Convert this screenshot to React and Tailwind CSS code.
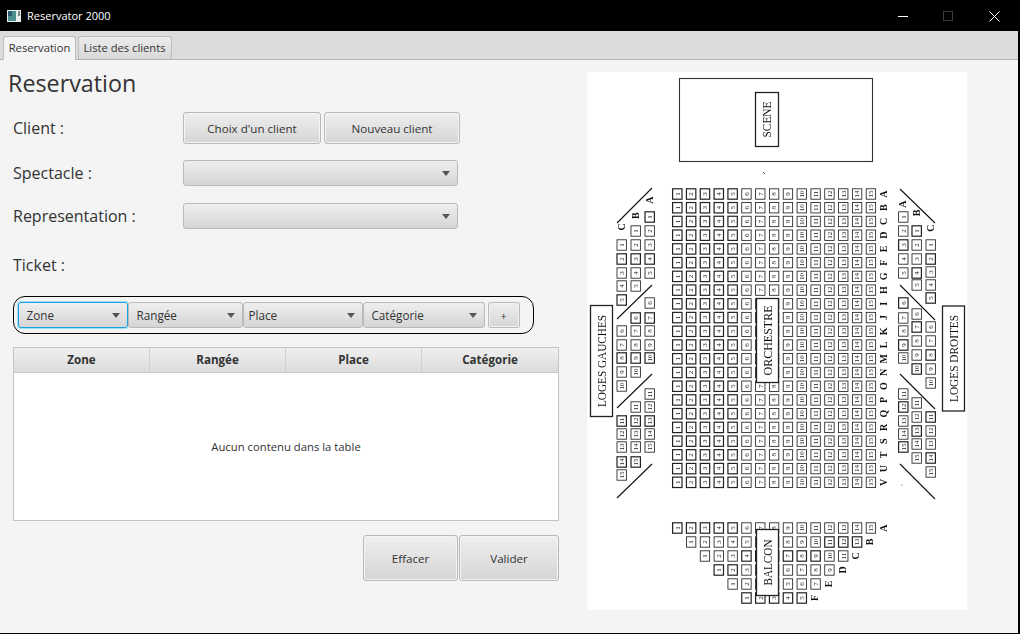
import React from 'react'

const btn = 'flex items-center justify-center rounded-[3px] border border-[#b9b9b9] bg-gradient-to-b from-[#efefef] to-[#d5d5d5] pt-[2px] text-[#333] shadow-[inset_0_0_0_1px_#f4f4f4]'

const Combo = ({label, className, focused}) => (
    <div className={`flex items-center justify-between rounded-[3px] border bg-gradient-to-b from-[#efefef] to-[#d5d5d5] pr-[7px] ${focused ? 'border-[#1ba1e2] shadow-[0_0_0_1px_#9fdcf5]' : 'border-[#b9b9b9]'} ${className}`}>
        <span className="pt-[2px] text-[11.7px] text-[#333]">{label}</span>
        <svg width="8" height="5" viewBox="0 0 8 5"><path d="M0 0h8L4 5z" fill="#555"/></svg>
    </div>
)

const Label = ({children, className}) => (
    <div className={`text-[16px] leading-[22px] text-[#333] ${className}`}>{children}</div>
)

const Seat = ({x, y, n}) => (
    <g>
        <rect x={x - 4.7} y={y - 5.2} width="9.4" height="10.4" fill="#fff" stroke="#222" strokeWidth={(n + Math.round(x)) % 3 === 0 ? 1.2 : 0.85}/>
        <text x={x} y={y} transform={`rotate(-90 ${x} ${y})`} textAnchor="middle" dy="2.3" fontSize="7" fill="#222">{n}</text>
    </g>
)

const Letter = ({x, y, c, size = 10}) => (
    <text x={x} y={y} transform={`rotate(-90 ${x} ${y})`} textAnchor="middle" dy="3.4" fontSize={size} fontWeight="bold" fill="#111">{c}</text>
)

const Box = ({x, y, w, h, label, len}) => (
    <g>
        <rect x={x} y={y} width={w} height={h} fill="#fff" stroke="#222" strokeWidth="1.3"/>
        <text x={x + w / 2} y={y + h / 2} transform={`rotate(-90 ${x + w / 2} ${y + h / 2})`} textAnchor="middle" dy="4.3" fontSize="12.5" fill="#111" textLength={len} lengthAdjust="spacingAndGlyphs">{label}</text>
    </g>
)

const colX = i => 677.3 + (i - 1) * 13.83
const rowLetters = 'ABCDEFGHIJKLMNOPQRSTUV'.split('')

// loges : y of seats 1..15 for each column
const logeA = [217, 231, 245, 259, 273, 303, 318, 331, 345, 358, 394, 407, 421, 434, 447]
const logeB = [231, 245, 259, 273, 286, 318, 331, 345, 358, 372, 407, 421, 434, 447, 462]
const logeC = [245, 259, 273, 286, 300, 331, 345, 358, 372, 386, 421, 434, 447, 462, 475]

const logeBR = [231, 245, 259, 273, 285, 314, 327, 341, 355, 369, 403, 417, 431, 444, 458]
const logeCR = [245, 259, 272, 285, 298, 327, 341, 355, 369, 383, 417, 431, 444, 458, 472]

const balcon = [
    {start: 1, nums: [1, 2, 3, 4, 5, 6, 7, 8, 9, 10, 11, 12, 13, 14, 15], letter: 'A'},
    {start: 2, nums: [1, 2, 3, 4, 5, 6, 7, 8, 9, 10, 11, 12, 13], letter: 'B'},
    {start: 3, nums: [1, 2, 3, 4, 5, 6, 7, 8, 9, 10, 11], letter: 'C'},
    {start: 4, nums: [1, 2, 3, 4, 5, 6, 7, 8, 9], letter: 'D'},
    {start: 5, nums: [1, 2, 3, 4, 5, 6, 7], letter: 'E'},
    {start: 6, nums: [1, 2, 3, 4, 5], letter: 'F'},
]

const Diagonal = ({x1, y1, x2, y2}) => <line x1={x1} y1={y1} x2={x2} y2={y2} stroke="#111" strokeWidth="1.1"/>

const SeatMap = () => (
    <svg viewBox="587 72 380 538" width="380" height="538" className="blur-[0.3px]" fontFamily="'Liberation Serif', serif">
        <rect x="587" y="72" width="380" height="538" fill="#fff"/>

        {/* scene */}
        <rect x="679.5" y="78.5" width="193" height="83" fill="none" stroke="#333" strokeWidth="1.1"/>
        <Box x={755.5} y={92.5} w={23} h={54} label="SCENE" len={36}/>
        <line x1="763" y1="172" x2="765" y2="174" stroke="#444"/>

        {/* orchestre */}
        {rowLetters.map((c, r) => {
            const y = 194 + r * 13.73
            return (
                <g key={c}>
                    {Array.from({length: 15}, (_, i) => <Seat key={i} x={colX(i + 1)} y={y} n={i + 1}/>)}
                    <Letter x={884} y={y} c={c}/>
                </g>
            )
        })}
        <Box x={756.5} y={298.5} w={22} h={84} label="ORCHESTRE" len={70}/>

        {/* loges gauches */}
        <Box x={590.5} y={305.5} w={22} h={111} label="LOGES GAUCHES" len={92}/>
        {logeA.map((y, i) => <Seat key={i} x={649.7} y={y} n={i + 1}/>)}
        {logeB.map((y, i) => <Seat key={i} x={635.7} y={y} n={i + 1}/>)}
        {logeC.map((y, i) => <Seat key={i} x={621.7} y={y} n={i + 1}/>)}
        <Letter x={650} y={200} c="A"/>
        <Letter x={635.7} y={215.7} c="B"/>
        <Letter x={621.7} y={227} c="C"/>
        <Diagonal x1={617} y1={223} x2={652} y2={188}/>
        <Diagonal x1={617} y1={319} x2={652} y2={285}/>
        <Diagonal x1={617} y1={408} x2={652} y2={374}/>
        <Diagonal x1={617} y1={498} x2={652} y2={464}/>

        {/* loges droites */}
        <Box x={942.5} y={306} w={22} h={105} label="LOGES DROITES" len={87}/>
        {logeA.map((y, i) => <Seat key={i} x={903.3} y={y} n={i + 1}/>)}
        {logeBR.map((y, i) => <Seat key={i} x={916.7} y={y} n={i + 1}/>)}
        {logeCR.map((y, i) => <Seat key={i} x={930.7} y={y} n={i + 1}/>)}
        <Letter x={903} y={204} c="A"/>
        <Letter x={917} y={213} c="B"/>
        <Letter x={931} y={228} c="C"/>
        <Diagonal x1={900} y1={189} x2={935} y2={223}/>
        <Diagonal x1={900} y1={285} x2={935} y2={320}/>
        <Diagonal x1={900} y1={374} x2={935} y2={409}/>
        <Diagonal x1={900} y1={464} x2={935} y2={499}/>
        <circle cx="902" cy="485" r="0.6" fill="#444"/>

        {/* balcon */}
        {balcon.map((row, r) => {
            const y = 528 + r * 14
            return (
                <g key={row.letter}>
                    {row.nums.map((n, i) => <Seat key={i} x={colX(row.start + i)} y={y} n={n}/>)}
                    <Letter x={colX(row.start + row.nums.length) - 1} y={y} c={row.letter}/>
                </g>
            )
        })}
        <Box x={756.5} y={529.5} w={22} h={66} label="BALCON" len={46}/>
    </svg>
)

const App = () => {
    return (
        <div className="flex h-[634px] w-[1020px] flex-col overflow-hidden border-r-2 border-b border-black bg-[#f4f4f4] font-['Open_Sans',sans-serif]">
            {/* barre de titre */}
            <div className="flex h-[31px] shrink-0 items-center bg-black pt-px text-white">
                <svg className="ml-[7px]" width="14" height="12" viewBox="0 0 14 12">
                    <rect width="14" height="12" fill="#e8efee"/>
                    <rect x="1" y="1" width="8" height="10" fill="#4d8f8b"/>
                    <rect x="1" y="1" width="4" height="5" fill="#2c5a70"/>
                    <rect x="11" y="1" width="2" height="5" fill="#7a8a8a"/>
                </svg>
                <span className="ml-[6px] text-[11px]">Reservator 2000</span>
                <div className="ml-auto flex items-center">
                    <svg width="10" height="10" viewBox="0 0 10 10"><path d="M0 5.5h10" stroke="#fff"/></svg>
                    <svg className="ml-[35px]" width="10" height="10" viewBox="0 0 10 10"><rect x=".5" y=".5" width="9" height="9" fill="none" stroke="#3a3a3a"/></svg>
                    <svg className="mr-[18px] ml-[36px]" width="11" height="11" viewBox="0 0 11 11"><path d="M.5.5l10 10M10.5.5l-10 10" stroke="#fff"/></svg>
                </div>
            </div>

            {/* onglets */}
            <div className="flex h-[29px] shrink-0 items-end gap-[1.5px] border-b border-[#b5b5b5] bg-[#dcdcdc] pl-[3px]">
                <div className="-mb-px flex h-[24px] w-[73px] items-center justify-center rounded-t-[3px] border border-b-0 border-[#bcbcbc] bg-[#f4f4f4] text-[11.2px] text-[#333]">Reservation</div>
                <div className="flex h-[23px] w-[94px] items-center justify-center rounded-t-[3px] border border-b-0 border-[#bcbcbc] bg-gradient-to-b from-[#ececec] to-[#d8d8d8] text-[11.2px] text-[#333]">Liste des clients</div>
            </div>

            <div className="flex flex-1">
                {/* partie gauche */}
                <div className="w-[587px] shrink-0">
                    <div className="ml-2 mt-[6px] text-[23.3px] leading-[34px] text-[#333]">Reservation</div>

                    <div className="ml-[13px] mt-[12px] flex h-[32px] items-center">
                        <Label className="w-[170px]">Client :</Label>
                        <button className={`${btn} h-[32px] w-[138px] text-[11.6px]`}>Choix d'un client</button>
                        <button className={`${btn} ml-[3px] h-[32px] w-[136px] text-[11.6px]`}>Nouveau client</button>
                    </div>
                    <div className="ml-[13px] mt-[16px] flex h-[26px] items-center">
                        <Label className="w-[170px]">Spectacle :</Label>
                        <Combo className="h-[26px] w-[275px]" label=""/>
                    </div>
                    <div className="ml-[13px] mt-[17px] flex h-[26px] items-center">
                        <Label className="w-[170px]">Representation :</Label>
                        <Combo className="h-[26px] w-[275px]" label=""/>
                    </div>
                    <Label className="ml-[13px] mt-[25px]">Ticket :</Label>

                    {/* ajout ticket */}
                    <div className="ml-[13px] mt-[20px] flex h-[38px] w-[521px] items-center rounded-[12px] border-[1.5px] border-black pl-[3.5px]">
                        <Combo className="h-[26px] w-[110px] pl-[8px]" label="Zone" focused/>
                        <Combo className="h-[26px] w-[115px] pl-[8px]" label="Rangée"/>
                        <Combo className="h-[26px] w-[120px] pl-[5px]" label="Place"/>
                        <Combo className="h-[26px] w-[122px] pl-[8px]" label="Catégorie"/>
                        <button className={`${btn} ml-[3px] h-[26px] w-[32px] text-[10px]`}>+</button>
                    </div>

                    {/* table */}
                    <div className="ml-[13px] mt-[13px] flex h-[174px] w-[546px] flex-col border border-[#c4c4c4] bg-white">
                        <div className="grid h-[25px] shrink-0 grid-cols-4 border-b border-[#c8c8c8] bg-gradient-to-b from-[#efefef] to-[#dcdcdc] text-[11.6px] font-bold text-[#333]">
                            <div className="flex items-center justify-center border-r border-[#cfcfcf]">Zone</div>
                            <div className="flex items-center justify-center border-r border-[#cfcfcf]">Rangée</div>
                            <div className="flex items-center justify-center border-r border-[#cfcfcf]">Place</div>
                            <div className="flex items-center justify-center">Catégorie</div>
                        </div>
                        <div className="flex flex-1 items-center justify-center pt-[2px] text-[11.3px] text-[#333]">Aucun contenu dans la table</div>
                    </div>

                    <div className="ml-[363px] mt-[14px] flex">
                        <button className={`${btn} h-[46px] w-[95px] text-[11.6px]`}>Effacer</button>
                        <button className={`${btn} ml-px h-[46px] w-[100px] text-[11.6px]`}>Valider</button>
                    </div>
                </div>

                {/* plan de la salle */}
                <div className="mt-[12px]">
                    <SeatMap/>
                </div>
            </div>
        </div>
    )
}

export default App
